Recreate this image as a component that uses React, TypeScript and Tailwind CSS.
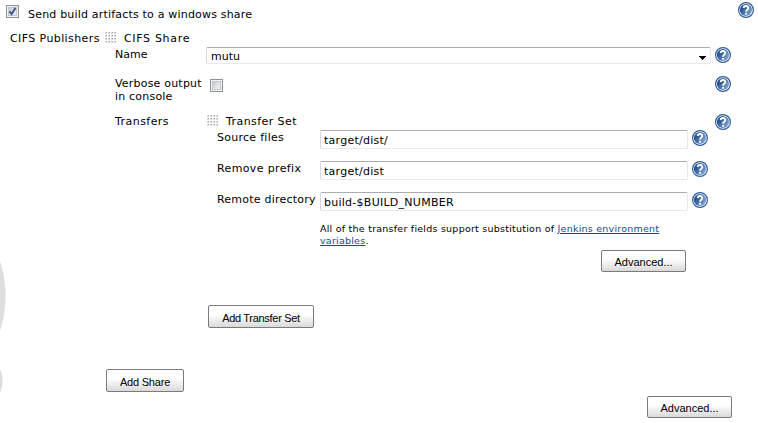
import type { ReactNode } from 'react';

function Help() {
  return (
    <svg className="block h-4 w-4 shrink-0" viewBox="0 0 16 16" role="img">
      <defs>
        <linearGradient id="helpFill" x1="0" y1="0" x2="1" y2="0.6">
          <stop offset="0.25" stopColor="#24508f" />
          <stop offset="1" stopColor="#7fa3d0" />
        </linearGradient>
      </defs>
      <circle cx="8" cy="8" r="7.4" fill="#fff" stroke="#305c9a" strokeWidth="1.2" />
      <circle cx="8" cy="8" r="6.1" fill="url(#helpFill)" />
      <path d="M5.7 6.1C5.7 3.3 10.3 3.3 10.3 6C10.3 7.8 8 7.8 8 9.8" fill="none" stroke="#fff" strokeWidth="1.8" />
      <rect x="7.1" y="10.9" width="1.9" height="1.8" fill="#fff" />
    </svg>
  );
}

function Grip() {
  return (
    <svg className="block h-[11px] w-[11px] shrink-0" viewBox="0 0 11 11" shapeRendering="crispEdges">
      {[0, 3, 6, 9].map((y) =>
        [0, 3, 6, 9].map((x) => (
          <g key={`${x}-${y}`}>
            <rect x={x} y={y} width="2" height="2" fill="#d8d8d8" />
            <rect x={x + 1} y={y} width="1" height="1" fill="#a5a5a5" />
          </g>
        )),
      )}
    </svg>
  );
}

function Check({ checked = false }: { checked?: boolean }) {
  return (
    <svg className="block h-[13px] w-[13px] shrink-0" viewBox="0 0 13 13">
      <defs>
        <linearGradient id="boxFill" x1="0" y1="0" x2="1" y2="1">
          <stop offset="0" stopColor="#c5c9cf" />
          <stop offset="1" stopColor="#f7f7f8" />
        </linearGradient>
      </defs>
      <rect x="0.5" y="0.5" width="12" height="12" fill="#f4f4f4" stroke="#8e8f8f" />
      <rect x="2.5" y="2.5" width="8" height="8" fill="url(#boxFill)" stroke="#c3c7cc" />
      {checked && <path d="M3.5 6.3L5.6 9L9.6 2.8" fill="none" stroke="#3f579c" strokeWidth="2" />}
    </svg>
  );
}

function Field({ label, value, spacing }: { label: string; value: string; spacing: string }) {
  return (
    <div className="flex h-[31px] items-start">
      <div className={`w-[103px] shrink-0 pt-px whitespace-nowrap ${spacing}`}>{label}</div>
      <div className="h-[19px] w-[368px] shrink-0 rounded-[2px] border border-[#e3e9ef] border-t-[#abadb3] border-l-[#d5d7df] pt-[3px] pl-[3px] tracking-[0.26px] whitespace-nowrap">
        {value}
      </div>
      <div className="ml-1">
        <Help />
      </div>
    </div>
  );
}

function Button({ className, children }: { className: string; children: ReactNode }) {
  return (
    <button
      className={`block shrink-0 rounded-[2px] border border-[#7b7b7b] bg-gradient-to-b from-white from-40% to-[#d9d9d9] pt-[3px] text-center font-['Liberation_Sans',sans-serif] text-[11px] leading-[13px] whitespace-nowrap text-black ${className}`}
    >
      {children}
    </button>
  );
}

export default function App() {
  return (
    <div className="relative h-[423px] w-[758px] overflow-hidden bg-white font-['DejaVu_Sans',Verdana,sans-serif] text-[11px] leading-[13px] text-black">
      <svg className="absolute top-[240px] left-0 h-[183px] w-2" viewBox="0 0 8 183">
        <ellipse cx="-44" cy="56" rx="49.6" ry="75" fill="#dedede" />
        <ellipse cx="-17" cy="141" rx="19.6" ry="24" fill="#dedede" />
      </svg>

      <div className="flex h-[31px] items-start pl-1.5">
        <div className="mt-[5px]">
          <Check checked />
        </div>
        <div className="mt-2 ml-[9px] grow tracking-[0.19px]">Send build artifacts to a windows share</div>
        <div className="mt-0.5 mr-1">
          <Help />
        </div>
      </div>

      <div className="flex h-4 items-start pl-2.5">
        <div className="mt-px w-[95px] tracking-[0.4px] whitespace-nowrap">CIFS Publishers</div>
        <div className="mt-px">
          <Grip />
        </div>
        <div className="mt-px ml-2 tracking-[0.68px]">CIFS Share</div>
      </div>

      <div className="flex h-[30px] items-start pl-[115px]">
        <div className="mt-px w-[91px]">Name</div>
        <div className="flex h-[17px] w-[505px] rounded-[2px] border border-[#e3e9ef] border-t-[#abadb3] border-l-[#d5d7df] pt-0.5 pl-1">
          <span className="grow">mutu</span>
          <svg className="mt-[6px] mr-1 block h-1 w-[7px]" viewBox="0 0 7 4" shapeRendering="crispEdges">
            <path d="M0 0H7V1H6V2H5V3H4V4H3V3H2V2H1V1H0Z" />
          </svg>
        </div>
        <div className="ml-1">
          <Help />
        </div>
      </div>

      <div className="flex h-[37px] items-start pl-[115px]">
        <div className="w-[95px] tracking-[0.2px]">
          Verbose output
          <br />
          in console
        </div>
        <div className="mt-[2px] grow">
          <Check />
        </div>
        <div className="mr-[27px] -mt-px">
          <Help />
        </div>
      </div>

      <div className="flex h-4 items-start pl-[115px]">
        <div className="mt-px w-[92px] tracking-[0.45px]">Transfers</div>
        <div className="mt-px">
          <Grip />
        </div>
        <div className="mt-px ml-2 grow tracking-[0.43px]">Transfer Set</div>
        <div className="mr-[27px]">
          <Help />
        </div>
      </div>

      <div className="pl-[217px]">
        <Field label="Source files" value="target/dist/" spacing="tracking-[0.27px]" />
        <Field label="Remove prefix" value="target/dist" spacing="tracking-[0.37px]" />
        <Field label="Remote directory" value="build-$BUILD_NUMBER" spacing="tracking-[0.22px]" />
      </div>

      <div className="ml-[320px] h-[27px] text-[9.5px] leading-3 tracking-[0.235px] whitespace-nowrap">
        All of the transfer fields support substitution of <a className="text-[#204a87] underline">Jenkins environment</a>
        <br />
        <a className="text-[#204a87] underline">variables</a>.
      </div>

      <div className="flex h-[55px] pl-[601px]">
        <Button className="h-[22px] w-[85px]">Advanced...</Button>
      </div>
      <div className="flex h-16 pl-[208px]">
        <Button className="h-[23px] w-[106px] tracking-[-0.3px]">Add Transfer Set</Button>
      </div>
      <div className="flex h-[27px] pl-[106px]">
        <Button className="h-[23px] w-[78px] tracking-[-0.2px]">Add Share</Button>
      </div>
      <div className="flex pl-[647px]">
        <Button className="h-[22px] w-[85px]">Advanced...</Button>
      </div>
    </div>
  );
}
